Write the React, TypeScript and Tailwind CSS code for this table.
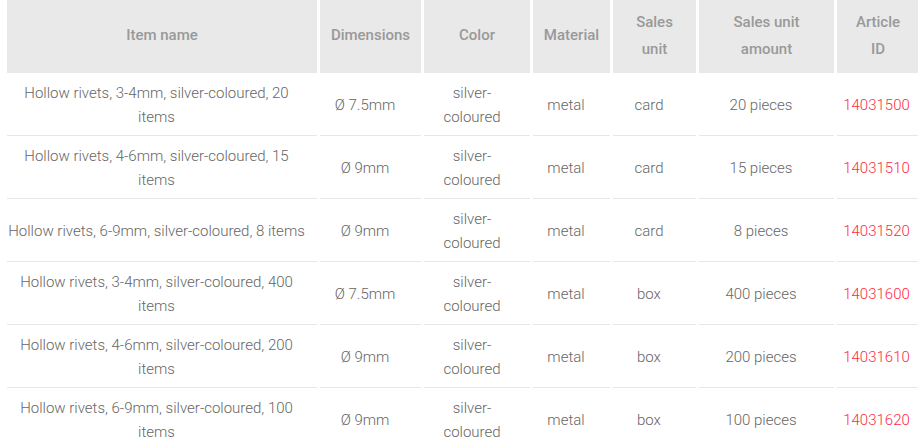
import React from 'react';

type Row = {
  name: string;
  size: string;
  material: string;
  unit: string;
  amount: string;
  id: string;
};

const rows: Row[] = [
  { name: 'Hollow rivets, 3-4mm, silver-coloured, 20 items', size: 'Ø 7.5mm', material: 'metal', unit: 'card', amount: '20 pieces', id: '14031500' },
  { name: 'Hollow rivets, 4-6mm, silver-coloured, 15 items', size: 'Ø 9mm', material: 'metal', unit: 'card', amount: '15 pieces', id: '14031510' },
  { name: 'Hollow rivets, 6-9mm, silver-coloured, 8 items', size: 'Ø 9mm', material: 'metal', unit: 'card', amount: '8 pieces', id: '14031520' },
  { name: 'Hollow rivets, 3-4mm, silver-coloured, 400 items', size: 'Ø 7.5mm', material: 'metal', unit: 'box', amount: '400 pieces', id: '14031600' },
  { name: 'Hollow rivets, 4-6mm, silver-coloured, 200 items', size: 'Ø 9mm', material: 'metal', unit: 'box', amount: '200 pieces', id: '14031610' },
  { name: 'Hollow rivets, 6-9mm, silver-coloured, 100 items', size: 'Ø 9mm', material: 'metal', unit: 'box', amount: '100 pieces', id: '14031620' },
];

const headers = [
  { label: 'Item name', w: 'w-[310px] px-[10px]' },
  { label: 'Dimensions', w: 'w-[101px] px-[10px]' },
  { label: 'Color', w: 'w-[106px] px-[10px]' },
  { label: 'Material', w: 'w-[77px] px-[10px]' },
  { label: 'Sales unit', w: 'w-[83px] px-[10px]' },
  { label: 'Sales unit amount', w: 'w-[135px] px-[10px]' },
  { label: 'Article ID', w: 'w-[82px] px-[14px]' },
];

const Cell: React.FC<{ children: React.ReactNode; className?: string }> = ({ children, className = '' }) => (
  <td className="p-0 align-middle">
    <div className={`flex h-[63px] items-center justify-center border-b border-[#e6e6e6] pt-[2px] text-center ${className}`}>
      <span>{children}</span>
    </div>
  </td>
);

export default function App() {
  return (
    <div className="h-[448px] w-[918px] overflow-hidden bg-white pl-[4px]" style={{ fontFamily: 'Roboto, "Liberation Sans", sans-serif' }}>
      <table className="w-[918px] table-fixed border-separate border-spacing-x-[3px] border-spacing-y-0 text-[15px] leading-6 font-light text-[#666]">
        <thead>
          <tr>
            {headers.map((h) => (
              <th key={h.label} className={`${h.w} h-[73px] bg-[#e9e9e9] pb-[2px] text-center align-middle text-[15px] leading-[27px] font-medium text-[#999]`}>
                {h.label}
              </th>
            ))}
          </tr>
        </thead>
        <tbody>
          {rows.map((r) => (
            <tr key={r.id}>
              <Cell className="pr-[11px]">{r.name}</Cell>
              <Cell className="pr-[11px]">{r.size}</Cell>
              <Cell className="pl-[16px] pr-[26px]">silver-coloured</Cell>
              <Cell className="pr-[11px]">{r.material}</Cell>
              <Cell className="pr-[11px]">{r.unit}</Cell>
              <Cell className="pr-[11px]">{r.amount}</Cell>
              <Cell className="pr-[3px] text-[#ff2a44]">{r.id}</Cell>
            </tr>
          ))}
        </tbody>
      </table>
    </div>
  );
}
